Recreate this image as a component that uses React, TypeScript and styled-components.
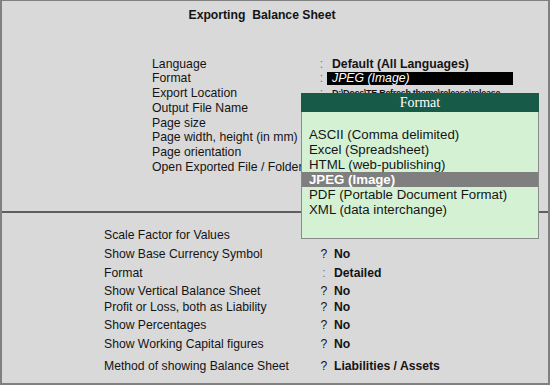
import React from "react";
import styled, { createGlobalStyle } from "styled-components";

const GlobalStyle = createGlobalStyle`
  html, body {
    margin: 0;
    padding: 0;
    background: #d9d9d9;
  }
  body {
    font-family: "Liberation Sans", Arial, sans-serif;
    color: #141414;
  }
`;

const Frame = styled.div`
  position: relative;
  width: 550px;
  height: 385px;
  box-sizing: border-box;
  background: #d9d9d9;
  border-style: solid;
  border-color: #808080;
  border-width: 1px 2px 2px 2px;
  overflow: hidden;
`;

const Title = styled.div`
  margin-top: 6.5px;
  padding-right: 26px;
  text-align: center;
  font-weight: bold;
  font-size: 12.2px;
  line-height: 15px;
  white-space: pre;
`;

const TopGrid = styled.div`
  margin-top: 34px;
  padding-left: 150px;
  display: grid;
  grid-template-columns: 164px 11px 1fr;
  grid-auto-rows: 14.8px;
  font-size: 12.25px;
  line-height: 14.8px;
`;

const Label = styled.div`
  white-space: nowrap;
`;

const Mark = styled.div<{ $dim?: boolean }>`
  text-align: center;
  color: ${(p) => (p.$dim ? "#777" : "#141414")};
`;

const Value = styled.div<{ $bold?: boolean }>`
  padding-left: 5px;
  font-weight: ${(p) => (p.$bold ? "bold" : "normal")};
  white-space: nowrap;
`;

const SelectedBox = styled.div`
  width: 181px;
  height: 13px;
  margin-top: 0.5px;
  padding-left: 5px;
  background: #000;
  color: #fff;
  font-style: italic;
  line-height: 13px;
  font-size: 12.25px;
`;

const PathValue = styled.div`
  padding-left: 5px;
  font-size: 9px;
  font-weight: bold;
  letter-spacing: -0.3px;
  white-space: nowrap;
`;

const Divider = styled.div`
  margin-top: 36.6px;
  height: 2px;
  background: #5e5e5e;
`;

const BottomList = styled.div`
  margin-top: 14.7px;
  padding-left: 102px;
  font-size: 12.2px;
  line-height: 15px;
`;

const BottomRow = styled.div<{ $gap: number }>`
  display: grid;
  grid-template-columns: 214px 12px 1fr;
  margin-top: ${(p) => p.$gap}px;
`;

const BottomValue = styled.div`
  padding-left: 4px;
  font-weight: bold;
  white-space: nowrap;
`;

const Popup = styled.div`
  position: absolute;
  left: 299px;
  top: 92.3px;
  width: 238px;
  height: 146px;
  box-sizing: border-box;
  background: #d4f1d4;
  border: 1px solid #8a8a8a;
  border-top: none;
`;

const PopupHeader = styled.div`
  height: 19px;
  margin: 0 -1px;
  background: #185a48;
  color: #fff;
  text-align: center;
  font-family: "Liberation Serif", "Times New Roman", serif;
  font-size: 14px;
  line-height: 19px;
`;

const PopupList = styled.div`
  padding-top: 15px;
  font-size: 13.25px;
  line-height: 15px;
`;

const PopupItem = styled.div<{ $active?: boolean }>`
  padding-left: 7px;
  background: ${(p) => (p.$active ? "#7f7f7f" : "transparent")};
  color: ${(p) => (p.$active ? "#fff" : "#141414")};
  font-weight: ${(p) => (p.$active ? "bold" : "normal")};
  white-space: nowrap;
`;

const formats = [
  "ASCII (Comma delimited)",
  "Excel (Spreadsheet)",
  "HTML (web-publishing)",
  "JPEG (Image)",
  "PDF (Portable Document Format)",
  "XML (data interchange)",
];

const bottomRows: { label: string; mark: string; value: string; gap: number }[] = [
  { label: "Scale Factor for Values", mark: "", value: "", gap: 0 },
  { label: "Show Base Currency Symbol", mark: "?", value: "No", gap: 4 },
  { label: "Format", mark: ":", value: "Detailed", gap: 3.6 },
  { label: "Show Vertical Balance Sheet", mark: "?", value: "No", gap: 3.7 },
  { label: "Profit or Loss, both as Liability", mark: "?", value: "No", gap: 0.3 },
  { label: "Show Percentages", mark: "?", value: "No", gap: 3.7 },
  { label: "Show Working Capital figures", mark: "?", value: "No", gap: 3.7 },
  { label: "Method of showing Balance Sheet", mark: "?", value: "Liabilities / Assets", gap: 7 },
];

export default function App() {
  return (
    <>
      <GlobalStyle />
      <Frame>
        <Title>{"Exporting  Balance Sheet"}</Title>

        <TopGrid>
          <Label>Language</Label>
          <Mark $dim>:</Mark>
          <Value $bold>Default (All Languages)</Value>

          <Label>Format</Label>
          <Mark $dim>:</Mark>
          <div>
            <SelectedBox>JPEG (Image)</SelectedBox>
          </div>

          <Label>Export Location</Label>
          <Mark $dim>:</Mark>
          <PathValue>D:\Docs\TE Refresh theme\release\release</PathValue>

          <Label>Output File Name</Label>
          <Mark />
          <Value />

          <Label>Page size</Label>
          <Mark />
          <Value />

          <Label>Page width, height (in mm)</Label>
          <Mark />
          <Value />

          <Label>Page orientation</Label>
          <Mark />
          <Value />

          <Label>Open Exported File / Folder</Label>
          <Mark />
          <Value />
        </TopGrid>

        <Divider />

        <BottomList>
          {bottomRows.map((r) => (
            <BottomRow key={r.label} $gap={r.gap}>
              <Label>{r.label}</Label>
              <Mark $dim={r.mark === ":"}>{r.mark}</Mark>
              <BottomValue>{r.value}</BottomValue>
            </BottomRow>
          ))}
        </BottomList>

        <Popup>
          <PopupHeader>Format</PopupHeader>
          <PopupList>
            {formats.map((f) => (
              <PopupItem key={f} $active={f === "JPEG (Image)"}>
                {f}
              </PopupItem>
            ))}
          </PopupList>
        </Popup>
      </Frame>
    </>
  );
}
